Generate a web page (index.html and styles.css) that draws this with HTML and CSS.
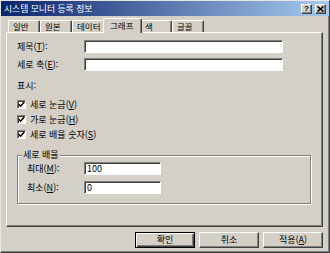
FILE: index.html
```html
<!DOCTYPE html>
<html lang="ko">
<head>
    <meta charset="UTF-8">
    <title>시스템 모니터 등록 정보</title>
    <link rel="stylesheet" href="styles.css">
</head>
<body>
    <div class="window">
        <div class="titlebar">
            <span class="title">시스템 모니터 등록 정보</span>
            <div class="caption-btns">
                <span class="cap-btn help">?</span>
                <span class="cap-btn">
                    <svg width="7" height="6" viewBox="0 0 7 6"><path d="M0.5 0.5 L6.5 5.5 M6.5 0.5 L0.5 5.5" stroke="#000" stroke-width="1.6"/></svg>
                </span>
            </div>
        </div>

        <div class="client">
            <div class="tabs">
                <div class="tab">일반</div>
                <div class="tab">원본</div>
                <div class="tab w33">데이터</div>
                <div class="tab active">그래프</div>
                <div class="tab">색</div>
                <div class="tab">글꼴</div>
            </div>

            <div class="panel">
                <div class="field-row">
                    <label class="field-label">제목(<u>T</u>):</label>
                    <div class="textbox wide"></div>
                </div>
                <div class="field-row">
                    <label class="field-label">세로 축(<u>E</u>):</label>
                    <div class="textbox wide"></div>
                </div>

                <div class="section-label">표시:</div>
                <div class="check-row"><span class="checkbox"><svg width="7" height="7" viewBox="0 0 7 7"><path d="M0.8 3.2 L2.6 5.2 L6.3 1" fill="none" stroke="#000" stroke-width="1.5"/></svg></span>세로 눈금(<u>V</u>)</div>
                <div class="check-row"><span class="checkbox"><svg width="7" height="7" viewBox="0 0 7 7"><path d="M0.8 3.2 L2.6 5.2 L6.3 1" fill="none" stroke="#000" stroke-width="1.5"/></svg></span>가로 눈금(<u>H</u>)</div>
                <div class="check-row"><span class="checkbox"><svg width="7" height="7" viewBox="0 0 7 7"><path d="M0.8 3.2 L2.6 5.2 L6.3 1" fill="none" stroke="#000" stroke-width="1.5"/></svg></span>세로 배율 숫자(<u>S</u>)</div>

                <div class="group">
                    <span class="group-title">세로 배율</span>
                    <div class="field-row">
                        <label class="field-label short">최대(<u>M</u>):</label>
                        <div class="textbox narrow">100</div>
                    </div>
                    <div class="field-row">
                        <label class="field-label short">최소(<u>N</u>):</label>
                        <div class="textbox narrow">0</div>
                    </div>
                </div>
            </div>

            <div class="buttons">
                <button class="btn default">확인</button>
                <button class="btn">취소</button>
                <button class="btn">적용(<u>A</u>)</button>
            </div>
        </div>
    </div>
</body>
</html>
```

FILE: styles.css
```css
* {
    margin: 0;
    padding: 0;
    box-sizing: border-box;
    font-family: 'Noto Sans CJK KR', 'Noto Sans', sans-serif;
}

body {
    width: 330px;
    height: 253px;
    background-color: #d4d0c8;
    overflow: hidden;
}

.window {
    width: 330px;
    height: 253px;
    border: 1px solid;
    border-color: #e8e6e0 #404040 #404040 #e8e6e0;
    box-shadow: inset -1px -1px 0 #808080;
    font-size: 9px;
    color: #000;
}

.titlebar {
    height: 15px;
    display: flex;
    align-items: center;
    justify-content: space-between;
    padding: 0 3px 0 3px;
    background: linear-gradient(to right, #0a246a, #a6caf0);
}

.title {
    color: #fff;
    font-size: 8.8px;
    line-height: 10px;
}

.caption-btns {
    display: flex;
    gap: 3px;
}

.cap-btn {
    width: 11px;
    height: 10px;
    display: flex;
    align-items: center;
    justify-content: center;
    background: #d4d0c8;
    border: 1px solid;
    border-color: #fff #404040 #404040 #fff;
    box-shadow: inset -1px -1px 0 #808080;
}

.cap-btn.help {
    font-family: 'Liberation Sans', sans-serif;
    font-weight: bold;
    font-size: 8px;
    line-height: 8px;
}

.client {
    padding: 0 6px 0 5px;
}

.tabs {
    display: flex;
    align-items: flex-end;
    height: 14px;
    margin-top: 2px;
    padding-left: 2px;
}

.tab {
    width: 32px;
    height: 12px;
    padding-left: 4px;
    font-size: 8.5px;
    line-height: 10px;
    border-top: 1px solid #fff;
    border-left: 1px solid #fff;
    border-right: 1px solid #404040;
    box-shadow: inset -1px 0 0 #808080;
    border-radius: 2px 2px 0 0;
}

.tab.w33 {
    width: 33px;
}

.tab.active {
    width: 39px;
    height: 15px;
    margin: 0 -2px -1px;
    padding-left: 6px;
    line-height: 12px;
    background: #d4d0c8;
    position: relative;
    z-index: 1;
}

.panel {
    height: 195px;
    padding: 7px 0 0 10px;
    border: 1px solid;
    border-color: #fff #404040 #404040 #fff;
    box-shadow: inset -1px -1px 0 #808080;
}

.field-row {
    display: flex;
    align-items: center;
    height: 13px;
    margin-bottom: 5px;
}

.field-label {
    width: 67px;
    line-height: 10px;
}

.field-label.short {
    width: 57px;
}

.textbox {
    height: 13px;
    background: #fff;
    border: 1px solid;
    border-color: #808080 #fff #fff #808080;
    box-shadow: inset 1px 1px 0 #404040, 1px 1px 0 #d4d0c8;
    padding-left: 2px;
    line-height: 11px;
}

.textbox.wide {
    width: 199px;
}

.textbox.narrow {
    width: 77px;
}

.section-label {
    margin-top: 10px;
    line-height: 10px;
}

.check-row {
    display: flex;
    align-items: center;
    height: 15px;
    line-height: 10px;
}

.section-label + .check-row {
    margin-top: 6px;
}

.checkbox {
    width: 9px;
    height: 9px;
    margin-right: 4px;
    display: flex;
    align-items: center;
    justify-content: center;
    background: #fff;
    border: 1px solid;
    border-color: #808080 #fff #fff #808080;
    box-shadow: inset 1px 1px 0 #404040;
}

.group {
    position: relative;
    width: 294px;
    height: 49px;
    margin-top: 13px;
    padding: 6px 0 0 9px;
    border: 1px solid #808080;
    box-shadow: inset 1px 1px 0 #fff, 1px 1px 0 #fff;
}

.group .field-row {
    margin-bottom: 6px;
}

.group-title {
    position: absolute;
    top: -6px;
    left: 4px;
    padding: 0 1px;
    line-height: 10px;
    background: #d4d0c8;
}

.buttons {
    display: flex;
    justify-content: flex-end;
    gap: 4px;
    margin-top: 5px;
}

.btn {
    width: 60px;
    height: 16px;
    font-size: 9px;
    line-height: 10px;
    background: #d4d0c8;
    color: #000;
    border: 1px solid;
    border-color: #fff #404040 #404040 #fff;
    box-shadow: inset -1px -1px 0 #808080;
}

.btn.default {
    border-color: #000;
    box-shadow: inset 1px 1px 0 #fff, inset -1px -1px 0 #404040, inset -2px -2px 0 #808080;
}
```
